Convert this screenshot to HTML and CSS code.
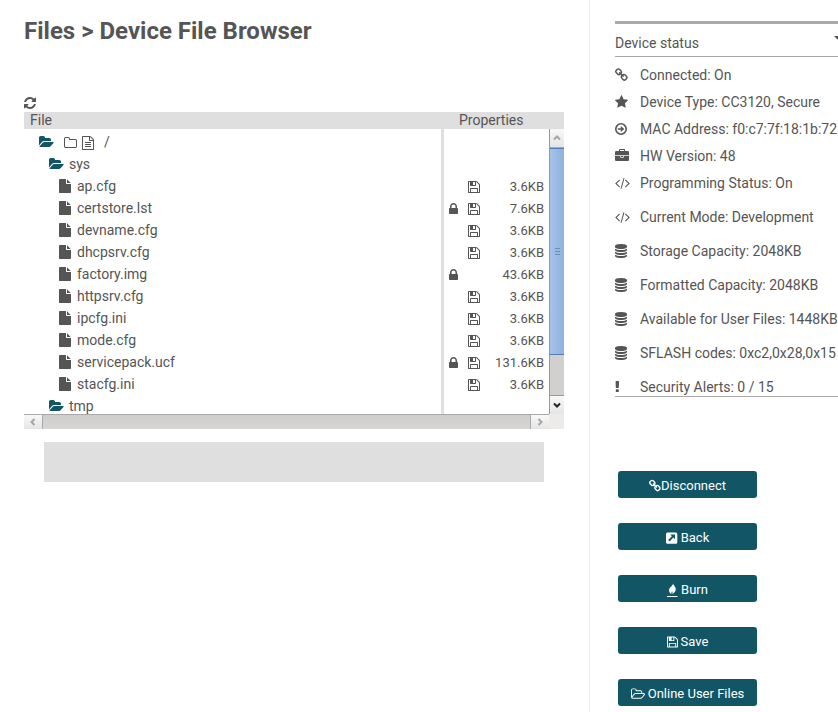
FILE: index.html
```html
<!DOCTYPE html>
<html lang="en">
<head>
<meta charset="utf-8">
<title>Device File Browser</title>
<link rel="stylesheet" href="styles.css">
</head>
<body>
<svg class="sprite" aria-hidden="true">
<symbol id="refresh" viewBox="128 0 1536 1792"><path d="M1639 1056q0 5-1 7-64 268-268 434.500t-478 166.500q-146 0-282.500-55t-243.500-157l-129 129q-19 19-45 19t-45-19-19-45v-448q0-26 19-45t45-19h448q26 0 45 19t19 45-19 45l-137 137q71 66 161 102t187 36q134 0 250-65t186-179q11-17 53-117 8-23 30-23h192q13 0 22.500 9.500t9.500 22.500zm25-800v448q0 26-19 45t-45 19h-448q-26 0-45-19t-19-45 19-45l138-138q-148-137-349-137-134 0-250 65t-186 179q-11 17-53 117-8 23-30 23h-199q-13 0-22.500-9.500t-9.500-22.500v-7q65-268 270-434.500t480-166.500q146 0 284 55.500t245 156.500l130-129q19-19 45-19t45 19 19 45z"/></symbol>
<symbol id="folder-open" viewBox="0 0 1920 1792"><path d="M1879 952q0 31-31 66l-336 396q-43 51-120.500 86.500t-143.500 35.500h-1088q-34 0-60.500-13t-26.500-43q0-31 31-66l336-396q43-51 120.500-86.500t143.500-35.500h1088q34 0 60.500 13t26.500 43zm-343-344v160h-832q-94 0-197 47.500t-164 119.500l-337 396-5 6q0-4-.5-12.500t-.5-12.500v-960q0-92 66-158t158-66h320q92 0 158 66t66 158v32h544q92 0 158 66t66 158z"/></symbol>
<symbol id="folder-o" viewBox="64 0 1664 1792"><path d="M1600 1312v-704q0-40-28-68t-68-28h-704q-40 0-68-28t-28-68v-64q0-40-28-68t-68-28h-320q-40 0-68 28t-28 68v960q0 40 28 68t68 28h1216q40 0 68-28t28-68zm128-704v704q0 92-66 158t-158 66h-1216q-92 0-158-66t-66-158v-960q0-92 66-158t158-66h320q92 0 158 66t66 158v32h672q92 0 158 66t66 158z"/></symbol>
<symbol id="folder-open-o" viewBox="64 0 1920 1792"><path d="M1845 931q0-35-53-35h-1088q-40 0-85.500 21.500t-71.500 52.500l-294 363q-18 24-18 40 0 35 53 35h1088q40 0 86-22t71-53l294-363q18-22 18-39zm-1141-163h768v-160q0-40-28-68t-68-28h-576q-40 0-68-28t-28-68v-64q0-40-28-68t-68-28h-320q-40 0-68 28t-28 68v853l256-315q44-53 116-87.500t140-34.500zm1269 163q0 62-46 120l-295 363q-43 53-116 87.500t-140 34.500h-1088q-92 0-158-66t-66-158v-960q0-92 66-158t158-66h320q92 0 158 66t66 158v32h544q92 0 158 66t66 158v160h192q54 0 99 24.500t67 70.500q15 32 15 68z"/></symbol>
<symbol id="file-text-o" viewBox="128 0 1536 1792"><path d="M1596 380q28 28 48 76t20 88v1152q0 40-28 68t-68 28h-1344q-40 0-68-28t-28-68v-1600q0-40 28-68t68-28h896q40 0 88 20t76 48zm-444-244v376h376q-10-29-22-41l-313-313q-12-12-41-22zm384 1528v-1024h-416q-40 0-68-28t-28-68v-416h-768v1536h1280zm-1024-864q0-14 9-23t23-9h704q14 0 23 9t9 23v64q0 14-9 23t-23 9h-704q-14 0-23-9t-9-23v-64zm736 224q14 0 23 9t9 23v64q0 14-9 23t-23 9h-704q-14 0-23-9t-9-23v-64q0-14 9-23t23-9h704zm0 256q14 0 23 9t9 23v64q0 14-9 23t-23 9h-704q-14 0-23-9t-9-23v-64q0-14 9-23t23-9h704z"/></symbol>
<symbol id="file" viewBox="128 0 1536 1792"><path d="M1152 512v-472q22 14 36 28l408 408q14 14 28 36h-472zm-128 32q0 40 28 68t68 28h544v1056q0 40-28 68t-68 28h-1344q-40 0-68-28t-28-68v-1600q0-40 28-68t68-28h800v544z"/></symbol>
<symbol id="floppy" viewBox="128 0 1536 1792"><path d="M512 1536h768v-384h-768v384zm896 0h128v-896q0-14-10-38.500t-20-34.500l-281-281q-10-10-34-20t-39-10v416q0 40-28 68t-68 28h-576q-40 0-68-28t-28-68v-416h-128v1280h128v-416q0-40 28-68t68-28h832q40 0 68 28t28 68v416zm-384-928v-320q0-13-9.500-22.500t-22.500-9.500h-192q-13 0-22.500 9.500t-9.500 22.500v320q0 13 9.500 22.500t22.500 9.500h192q13 0 22.500-9.500t9.500-22.500zm640 32v928q0 40-28 68t-68 28h-1344q-40 0-68-28t-28-68v-1344q0-40 28-68t68-28h928q40 0 88 20t76 48l280 280q28 28 48 76t20 88z"/></symbol>
<symbol id="lock" viewBox="320 0 1152 1792"><path d="M640 768h512v-192q0-106-75-181t-181-75-181 75-75 181v192zm832 96v576q0 40-28 68t-68 28h-960q-40 0-68-28t-28-68v-576q0-40 28-68t68-28h32v-192q0-184 132-316t316-132 316 132 132 316v192h32q40 0 68 28t28 68z"/></symbol>
<symbol id="chain" viewBox="80 0 1664 1792"><path d="M1520 1216q0-40-28-68l-208-208q-28-28-68-28-42 0-72 32 3 3 19 18.500t21.500 21.500 15 19 13 25.500 3.500 27.500q0 40-28 68t-68 28q-15 0-27.500-3.500t-25.500-13-19-15-21.500-21.500-18.500-19q-33 31-33 73 0 40 28 68l206 207q27 27 68 27 40 0 68-26l147-146q28-28 28-67zm-703-705q0-40-28-68l-206-207q-28-28-68-28-39 0-68 27l-147 146q-28 28-28 67 0 40 28 68l208 208q27 27 68 27 42 0 72-31-3-3-19-18.500t-21.500-21.500-15-19-13-25.500-3.500-27.500q0-40 28-68t68-28q15 0 27.500 3.500t25.500 13 19 15 21.500 21.500 18.500 19q33-31 33-73zm895 705q0 120-85 203l-147 146q-83 83-203 83-121 0-204-85l-206-207q-83-83-83-203 0-123 88-209l-88-88q-86 88-208 88-120 0-204-84l-208-208q-84-84-84-204t85-203l147-146q83-83 203-83 121 0 204 85l206 207q83 83 83 203 0 123-88 209l88 88q86-88 208-88 120 0 204 84l208 208q84 84 84 204z"/></symbol>
<symbol id="star" viewBox="64 0 1664 1792"><path d="M1728 647q0 22-26 48l-363 354 86 500q1 7 1 20 0 21-10.500 35.500t-30.500 14.500q-19 0-40-12l-449-236-449 236q-22 12-40 12-21 0-31.500-14.500t-10.500-35.500q0-6 2-20l86-500-364-354q-25-27-25-48 0-37 56-46l502-73 225-455q19-41 49-41t49 41l225 455 502 73q56 9 56 46z"/></symbol>
<symbol id="arrow-circle" viewBox="0 0 12 14"><circle cx="6" cy="7" r="5.200" fill="none" stroke="currentColor" stroke-width="1.600"/><path d="M2.800 6.200h3V4.100L9.300 7 5.800 9.900V7.800h-3z"/></symbol>
<symbol id="briefcase" viewBox="0 0 1792 1792"><path d="M640 256h512v-128h-512v128zm1152 640v480q0 66-47 113t-113 47h-1472q-66 0-113-47t-47-113v-480h672v160q0 26 19 45t45 19h320q26 0 45-19t19-45v-160h672zm-768 0v128h-256v-128h256zm768-480v384h-1792v-384q0-66 47-113t113-47h352v-160q0-40 28-68t68-28h576q40 0 68 28t28 68v160h352q66 0 113 47t47 113z"/></symbol>
<symbol id="code" viewBox="64 0 1920 1792"><path d="M681 1399l-50 50q-10 10-23 10t-23-10l-466-466q-10-10-10-23t10-23l466-466q10-10 23-10t23 10l50 50q10 10 10 23t-10 23l-393 393 393 393q10 10 10 23t-10 23zm591-1067l-373 1291q-4 13-15.500 19.500t-23.500 2.500l-62-17q-13-4-19.500-15.500t-2.500-24.500l373-1291q4-13 15.500-19.500t23.500-2.500l62 17q13 4 19.500 15.500t2.500 24.500zm657 651l-466 466q-10 10-23 10t-23-10l-50-50q-10-10-10-23t10-23l393-393-393-393q-10-10-10-23t10-23l50-50q10-10 23-10t23 10l466 466q10 10 10 23t-10 23z"/></symbol>
<symbol id="database" viewBox="128 0 1536 1792"><path d="M896 768q237 0 443-43t325-127v170q0 69-103 128t-280 93.500-385 34.500-385-34.500-280-93.500-103-128v-170q119 84 325 127t443 43zm0 768q237 0 443-43t325-127v170q0 69-103 128t-280 93.500-385 34.500-385-34.500-280-93.500-103-128v-170q119 84 325 127t443 43zm0-384q237 0 443-43t325-127v170q0 69-103 128t-280 93.500-385 34.500-385-34.500-280-93.500-103-128v-170q119 84 325 127t443 43zm0-1152q208 0 385 34.500t280 93.500 103 128v128q0 69-103 128t-280 93.500-385 34.500-385-34.500-280-93.500-103-128v-128q0-69 103-128t280-93.500 385-34.500z"/></symbol>
<symbol id="exclamation" viewBox="600 0 640 1792"><path d="M1088 1248v224q0 26-19 45t-45 19h-256q-26 0-45-19t-19-45v-224q0-26 19-45t45-19h256q26 0 45 19t19 45zm30-1056l-28 768q-1 26-20.500 45t-45.500 19h-256q-26 0-45.500-19t-20.500-45l-28-768q-1-26 17.500-45t44.500-19h320q26 0 44.500 19t17.500 45z"/></symbol>
<symbol id="back" viewBox="0 0 12 14"><path fill-rule="evenodd" d="M1.500 1.500h8.300a1.500 1.500 0 0 1 1.500 1.500v8.300a1.500 1.500 0 0 1-1.500 1.500H1.500A1.500 1.500 0 0 1 0 11.300V3a1.500 1.500 0 0 1 1.500-1.500zM4.300 3.600l1.600 1.600-3.700 3.900 1.400 1.400 3.700-3.900 1.700 1.600V3.600z"/></symbol>
<symbol id="burn" viewBox="0 0 11 14"><path d="M6 .5C6.300 2.200 8.900 3.800 8.800 6.400 8.700 8.600 6.800 9.600 5.300 11.300 5.500 10 5.800 9 5.200 8.200 4.600 9 4.100 9.900 4.400 11.200 2.600 10 1.800 8.400 2.100 6.500 2.500 4.200 5.700 3.200 6 .5zM0 13h10.500v1H0z"/></symbol>
</svg>

<div class="page">
<main class="files">
  <h1 class="title">Files &gt; Device File Browser</h1>
  <button class="refresh" type="button" aria-label="Refresh"><svg class="icon w12"><use href="#refresh"/></svg></button>

  <div class="browser">
    <div class="viewport">
      <table class="tree">
        <thead><tr><th class="name">File</th><th class="props">Properties</th></tr></thead>
        <tbody>
          <tr class="root"><td><div class="entry"><svg class="icon w15 teal"><use href="#folder-open"/></svg><button class="tool first" type="button" aria-label="New folder"><svg class="icon w13"><use href="#folder-o"/></svg></button><button class="tool" type="button" aria-label="New file"><svg class="icon w12"><use href="#file-text-o"/></svg></button><span>/</span></div></td><td></td></tr>
          <tr><td><div class="entry dir"><svg class="icon w15 teal"><use href="#folder-open"/></svg>sys</div></td><td></td></tr>
          <tr><td><div class="entry leaf"><svg class="icon w12"><use href="#file"/></svg>ap.cfg</div></td><td><div class="facts"><svg class="icon w12 save"><use href="#floppy"/></svg><span class="size">3.6KB</span></div></td></tr>
          <tr><td><div class="entry leaf"><svg class="icon w12"><use href="#file"/></svg>certstore.lst</div></td><td><div class="facts"><svg class="icon w9"><use href="#lock"/></svg><svg class="icon w12 save"><use href="#floppy"/></svg><span class="size">7.6KB</span></div></td></tr>
          <tr><td><div class="entry leaf"><svg class="icon w12"><use href="#file"/></svg>devname.cfg</div></td><td><div class="facts"><svg class="icon w12 save"><use href="#floppy"/></svg><span class="size">3.6KB</span></div></td></tr>
          <tr><td><div class="entry leaf"><svg class="icon w12"><use href="#file"/></svg>dhcpsrv.cfg</div></td><td><div class="facts"><svg class="icon w12 save"><use href="#floppy"/></svg><span class="size">3.6KB</span></div></td></tr>
          <tr><td><div class="entry leaf"><svg class="icon w12"><use href="#file"/></svg>factory.img</div></td><td><div class="facts"><svg class="icon w9"><use href="#lock"/></svg><span class="size">43.6KB</span></div></td></tr>
          <tr><td><div class="entry leaf"><svg class="icon w12"><use href="#file"/></svg>httpsrv.cfg</div></td><td><div class="facts"><svg class="icon w12 save"><use href="#floppy"/></svg><span class="size">3.6KB</span></div></td></tr>
          <tr><td><div class="entry leaf"><svg class="icon w12"><use href="#file"/></svg>ipcfg.ini</div></td><td><div class="facts"><svg class="icon w12 save"><use href="#floppy"/></svg><span class="size">3.6KB</span></div></td></tr>
          <tr><td><div class="entry leaf"><svg class="icon w12"><use href="#file"/></svg>mode.cfg</div></td><td><div class="facts"><svg class="icon w12 save"><use href="#floppy"/></svg><span class="size">3.6KB</span></div></td></tr>
          <tr><td><div class="entry leaf"><svg class="icon w12"><use href="#file"/></svg>servicepack.ucf</div></td><td><div class="facts"><svg class="icon w9"><use href="#lock"/></svg><svg class="icon w12 save"><use href="#floppy"/></svg><span class="size">131.6KB</span></div></td></tr>
          <tr><td><div class="entry leaf"><svg class="icon w12"><use href="#file"/></svg>stacfg.ini</div></td><td><div class="facts"><svg class="icon w12 save"><use href="#floppy"/></svg><span class="size">3.6KB</span></div></td></tr>
          <tr><td><div class="entry dir"><svg class="icon w15 teal"><use href="#folder-open"/></svg>tmp</div></td><td></td></tr>
        </tbody>
      </table>
    </div>
    <div class="vbar">
      <div class="vhead"></div>
      <button class="step up" type="button" aria-label="Scroll up"><svg class="chev" viewBox="0 0 8 8"><path d="M1 5.500l3-3 3 3"/></svg></button>
      <div class="thumb"><i></i><i></i><i></i></div>
      <div class="track"></div>
      <button class="step down" type="button" aria-label="Scroll down"><svg class="chev" viewBox="0 0 8 8"><path d="M1 2.500l3 3 3-3"/></svg></button>
    </div>
    <div class="hbar">
      <button class="step left" type="button" aria-label="Scroll left"><svg class="chev" viewBox="0 0 8 8"><path d="M5.500 1l-3 3 3 3"/></svg></button>
      <div class="htrack"></div>
      <button class="step right" type="button" aria-label="Scroll right"><svg class="chev" viewBox="0 0 8 8"><path d="M2.500 1l3 3-3 3"/></svg></button>
    </div>
    <div class="corner"></div>
  </div>
  <div class="message"></div>
</main>

<aside class="side">
  <section class="status">
    <h2 class="status-head">Device status<span class="caret"></span></h2>
    <ul class="status-list">
      <li><span class="mark"><svg class="icon w13"><use href="#chain"/></svg></span>Connected: On</li>
      <li><span class="mark"><svg class="icon w13"><use href="#star"/></svg></span>Device Type: CC3120, Secure</li>
      <li><span class="mark"><svg class="icon w12"><use href="#arrow-circle"/></svg></span>MAC Address: f0:c7:7f:18:1b:72</li>
      <li><span class="mark"><svg class="icon w14"><use href="#briefcase"/></svg></span>HW Version: 48</li>
      <li><span class="mark"><svg class="icon w15"><use href="#code"/></svg></span>Programming Status: On</li>
      <li class="wide"><span class="mark"><svg class="icon w15"><use href="#code"/></svg></span>Current Mode: Development</li>
      <li class="wide"><span class="mark"><svg class="icon w12"><use href="#database"/></svg></span>Storage Capacity: 2048KB</li>
      <li class="wide"><span class="mark"><svg class="icon w12"><use href="#database"/></svg></span>Formatted Capacity: 2048KB</li>
      <li class="wide"><span class="mark"><svg class="icon w12"><use href="#database"/></svg></span>Available for User Files: 1448KB</li>
      <li class="wide"><span class="mark"><svg class="icon w12"><use href="#database"/></svg></span>SFLASH codes: 0xc2,0x28,0x15</li>
      <li class="wide"><span class="mark"><svg class="icon w5"><use href="#exclamation"/></svg></span>Security Alerts: 0 / 15</li>
    </ul>
  </section>
  <nav class="actions">
    <button class="action tight" type="button"><svg class="icon w12"><use href="#chain"/></svg>Disconnect</button>
    <button class="action" type="button"><svg class="icon w12"><use href="#back"/></svg>Back</button>
    <button class="action" type="button"><svg class="icon w11"><use href="#burn"/></svg>Burn</button>
    <button class="action" type="button"><svg class="icon w11"><use href="#floppy"/></svg>Save</button>
    <button class="action" type="button"><svg class="icon w14"><use href="#folder-open-o"/></svg>Online User Files</button>
  </nav>
</aside>
</div>
</body>
</html>
```

FILE: styles.css
```css
* { box-sizing: border-box; }
body {
  margin: 0;
  background: #fff;
  color: #555;
  font: 14px/20px Roboto, "Liberation Sans", sans-serif;
}
button { padding: 0; border: 0; background: none; color: inherit; font: inherit; }
.sprite { position: absolute; width: 0; height: 0; }

.icon { display: block; flex: none; height: 14px; fill: currentColor; }
.w5 { width: 5px; }
.w9 { width: 9px; }
.w11 { width: 11px; }
.w12 { width: 12px; }
.w13 { width: 13px; }
.w14 { width: 14px; }
.w15 { width: 15px; }
.teal { color: #125666; }

.page { display: flex; min-height: 100vh; }

/* File browser */
.files { flex: 1; min-width: 0; padding: 16px 25px 0 24px; }
.title { margin: 0; font-size: 24px; line-height: 30px; }
.refresh { display: block; margin-top: 50px; }
.browser { display: grid; grid-template-columns: 1fr 15px; margin-top: 2px; }
.viewport { height: 302px; overflow: hidden; }
.tree { width: 100%; border-collapse: separate; border-spacing: 0; table-layout: fixed; }
.tree th { height: 17px; padding: 0 0 0 6px; background: #dfdfdf; font-weight: 400; line-height: 17px; text-align: left; }
.tree th.props { width: 108px; padding-left: 18px; }
.tree td { height: 22px; padding: 0; }
.tree td + td { border-left: 3px solid #dfdfdf; }
.tree .root td { height: 24px; padding-top: 2px; }
.entry { display: flex; align-items: center; height: 22px; padding-left: 15px; }
.dir { gap: 5px; padding-left: 25px; }
.leaf { gap: 6px; padding-left: 35px; }
.tool { margin-right: 5px; padding-top: 2px; }
.tool.first { margin-left: 10px; }
.entry span { margin-left: 5px; }
.facts { display: grid; grid-template-columns: 19px 12px 1fr; align-items: center; height: 22px; padding: 2px 5px 0; font-size: 13px; }
.save { grid-column: 2; }
.size { grid-column: 3; text-align: right; }

/* Scroll bars */
.vbar { display: flex; flex-direction: column; }
.vhead { height: 17px; background: #dfdfdf; }
.step { display: flex; align-items: center; justify-content: center; flex: none; background: linear-gradient(#f8f8f8, #e5e5e5); color: #a5a5a5; }
.chev { width: 8px; height: 8px; fill: none; stroke: currentColor; stroke-width: 2; }
.up, .down { height: 19px; border-left: 1px solid #999; }
.up { border-bottom: 1px solid #aaa; }
.down { border-top: 1px solid #999; color: #222; }
.thumb {
  display: flex;
  flex-direction: column;
  align-items: center;
  justify-content: center;
  gap: 2px;
  height: 207px;
  border: solid #4f7dba;
  border-width: 1px 0;
  border-left: 1px solid #999;
  background: linear-gradient(to right, #a5c2e9, #8eb1df);
}
.thumb i { width: 5px; height: 1px; background: #6c8ebb; }
.track { flex: 1; border-left: 1px solid #999; background: #d1d0ce; }
.hbar { display: flex; height: 15px; border-top: 1px solid #aaa; }
.left, .right { width: 19px; }
.left { border-right: 1px solid #aaa; }
.right { border-left: 1px solid #aaa; }
.htrack { flex: 1; background: linear-gradient(#cfcecc, #d7d6d4); }
.corner { background: #ecebea; }
.message { height: 40px; margin: 13px 20px 0; background: #dfdfdf; }

/* Device status */
.side { flex: 0 0 249px; overflow: hidden; padding: 21px 0 0 25px; border-left: 1px solid #eee; white-space: nowrap; }
.status { width: 240px; border-top: 3px solid #aaa; border-bottom: 1px solid #aaa; }
.status-head { display: flex; justify-content: space-between; margin: 0; padding: 9px 11px 3px 0; border-bottom: 1px solid #aaa; font-size: 14px; font-weight: 400; }
.caret { width: 10px; height: 5px; margin-top: 3px; border: solid transparent; border-width: 5px 5px 0; border-top-color: #555; }
.status-list { margin: 0 0 -1px; padding: 8px 0 0; list-style: none; }
.status-list li { display: flex; align-items: center; height: 20px; margin-bottom: 7px; }
.status-list .wide { margin-top: 14px; margin-bottom: 0; }
.mark { flex: none; width: 25px; }

/* Actions */
.actions { display: flex; flex-direction: column; align-items: flex-start; gap: 25px; padding: 74px 0 0 3px; }
.action {
  display: flex;
  align-items: center;
  justify-content: center;
  gap: 3px;
  width: 139px;
  height: 27px;
  padding-top: 2px;
  border-radius: 3px;
  background: #125666;
  color: #fff;
  font-size: 13px;
}
.tight { gap: 0; }
```
